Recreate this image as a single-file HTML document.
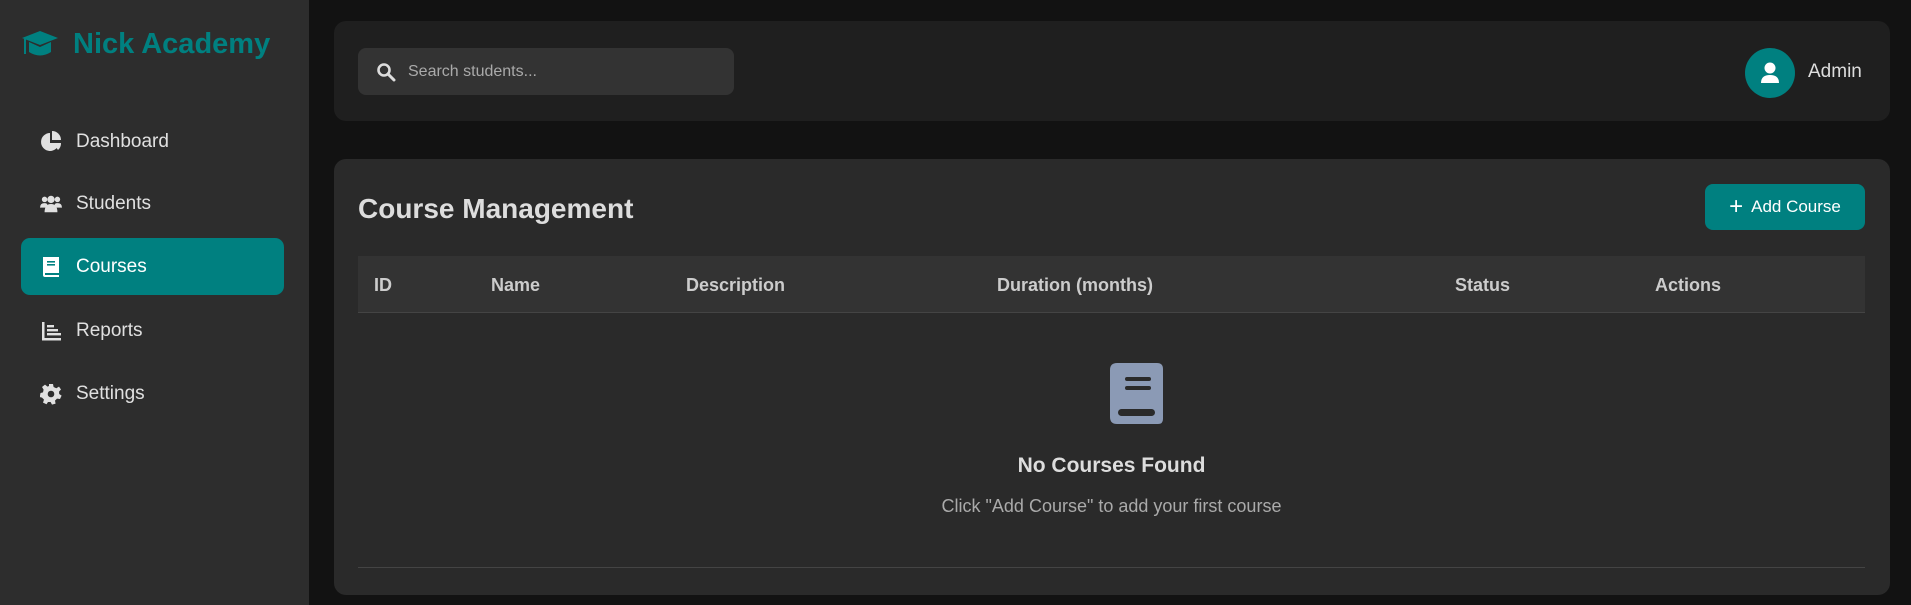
<!DOCTYPE html>
<html><head><meta charset="utf-8"><style>
*{box-sizing:border-box;margin:0;padding:0}
body{width:1911px;height:605px;background:#121212;font-family:"Liberation Sans",sans-serif;color:#ddd;position:relative;overflow:hidden}
.sb{position:absolute;left:0;top:0;width:309px;height:605px;background:#2d2d2d}
.logo{position:absolute;left:21px;top:28px;display:flex;align-items:center;color:#008080;font-weight:bold;font-size:29px}
.logo svg{margin-right:14px}
.nav{position:absolute;left:21px;width:263px;height:57px;border-radius:9px;display:flex;align-items:center;padding-left:19px;font-size:19px;color:#e0e0e0}
.nav svg{width:22px;height:22px;margin-right:14px;fill:#e0e0e0}
.nav.act{background:#008080;color:#fff}
.card{position:absolute;left:334px;width:1556px;border-radius:12px}
.top{top:21px;height:100px;background:#1f1f1f}
.search{position:absolute;left:24px;top:27px;width:376px;height:47px;background:#333;border-radius:8px;display:flex;align-items:center;padding-left:18px;color:#aaa;font-size:16px}
.search svg{margin-right:12px}
.av{position:absolute;left:1411px;top:27px;width:50px;height:50px;border-radius:50%;background:#008080;display:flex;align-items:center;justify-content:center}
.admin{position:absolute;left:1474px;top:40px;font-size:19px;color:#ddd}
.main{top:159px;height:436px;background:#2a2a2a}
h1{position:absolute;left:24px;top:34px;font-size:28px;color:#ddd}
.btn{position:absolute;left:1371px;top:25px;width:160px;height:46px;background:#008080;border-radius:8px;color:#fff;font-size:17px;display:flex;align-items:center;justify-content:center}
.th{position:absolute;left:24px;top:97px;width:1507px;height:57px;background:#333;border-bottom:1px solid #444;font-size:18px;font-weight:bold;color:#ccc}
.th span{position:absolute;top:19px}
.empty{position:absolute;left:24px;top:154px;width:1507px;height:255px;border-bottom:1px solid #444;text-align:center}
.empty svg{position:absolute;left:752px;top:50px}
.e1{position:absolute;width:100%;top:141px;font-size:21px;font-weight:bold;color:#ddd}
.e2{position:absolute;width:100%;top:183px;font-size:18px;color:#aaa}
</style></head><body>
<div class="sb">
<div class="logo"><svg width="38" height="30" viewBox="0 0 38 30"><path d="M19 1 L37 8 L19 15 L1 8 Z" fill="#008080"/><path d="M8 12 L8 22 Q19 29 30 22 L30 12 L19 17 Z" fill="#008080"/><rect x="3" y="9" width="2" height="15" fill="#008080"/></svg>Nick Academy</div>
<div class="nav" style="top:113px"><svg viewBox="0 0 22 22"><path d="M10 2 A9 9 0 1 0 19 12 L10 12 Z"/><path d="M12 0 A9 9 0 0 1 21 9 L12 9 Z"/><path d="M13 12 L21 12 A9 9 0 0 1 18 19 Z"/></svg>Dashboard</div>
<div class="nav" style="top:175px"><svg viewBox="0 0 24 22"><circle cx="5" cy="6" r="3"/><circle cx="19" cy="6" r="3"/><circle cx="12" cy="6" r="4"/><path d="M0 15 Q0 10 5 10 Q8 10 8 12 L8 15 Z"/><path d="M24 15 Q24 10 19 10 Q16 10 16 12 L16 15 Z"/><path d="M5 20 Q5 11 12 11 Q19 11 19 20 Z"/></svg>Students</div>
<div class="nav act" style="top:238px"><svg viewBox="0 0 22 22" style="fill:#fff"><path d="M3 1 H19 V17 H5 V19 H19 V21 H5 Q3 21 3 19 Z"/><rect x="7" y="5" width="8" height="1.6" fill="#008080"/><rect x="7" y="8" width="8" height="1.6" fill="#008080"/></svg>Courses</div>
<div class="nav" style="top:302px"><svg viewBox="0 0 22 22"><path d="M2 2 H4.5 V18 H21 V20.5 H2 Z"/><rect x="7" y="5" width="7" height="2.4"/><rect x="7" y="9" width="11" height="2.4"/><rect x="7" y="13" width="14" height="2.4"/></svg>Reports</div>
<div class="nav" style="top:365px"><svg viewBox="0 0 22 22"><path d="M9 1 H13 L13.6 4 L16.3 5.3 L19 3.6 L21 6.5 L19 8.6 L19.2 11 L21.6 12.6 L20 16 L17 15.6 L15 17.6 L15.6 20.6 L12 21.6 L10.6 19 H8 L6.5 21.3 L3 19.6 L4 16.6 L2 14.6 L-0.3 14 L0.5 10 L3 9.4 L3.6 6.6 L2 4 L5 1.6 L7.5 3.6 L9 3 Z"/><circle cx="11" cy="11" r="3.3" fill="#2d2d2d"/></svg>Settings</div>
</div>
<div class="card top">
<div class="search"><svg width="20" height="20" viewBox="0 0 20 20"><circle cx="8" cy="8" r="5.5" stroke="#ddd" stroke-width="2.6" fill="none"/><path d="M12 12 L18 18" stroke="#ddd" stroke-width="3" stroke-linecap="round"/></svg>Search students...</div>
<div class="av"><svg width="20" height="22" viewBox="0 0 20 22"><circle cx="10" cy="6" r="5.5" fill="#fff"/><path d="M1 21 Q1 13 10 13 Q19 13 19 21 Z" fill="#fff"/></svg></div>
<div class="admin">Admin</div>
</div>
<div class="card main">
<h1>Course Management</h1>
<div class="btn"><span style="font-size:24px;margin-right:8px;line-height:1">+</span>Add Course</div>
<div class="th"><span style="left:16px">ID</span><span style="left:133px">Name</span><span style="left:328px">Description</span><span style="left:639px">Duration (months)</span><span style="left:1097px">Status</span><span style="left:1297px">Actions</span></div>
<div class="empty">
<svg width="54" height="61" viewBox="0 0 54 61"><path d="M7 0 H47 Q53 0 53 6 V52 L53 56 Q53 61 48 61 H7 Q0 61 0 54 V7 Q0 0 7 0 Z" fill="#8b9ab5"/><rect x="15" y="14" width="26" height="4" rx="2" fill="#2a2a2a"/><rect x="15" y="23" width="26" height="4" rx="2" fill="#2a2a2a"/><rect x="8" y="46" width="37" height="7" rx="3.5" fill="#2a2a2a"/></svg>
<div class="e1">No Courses Found</div>
<div class="e2">Click "Add Course" to add your first course</div>
</div>
</div>
</body></html>
